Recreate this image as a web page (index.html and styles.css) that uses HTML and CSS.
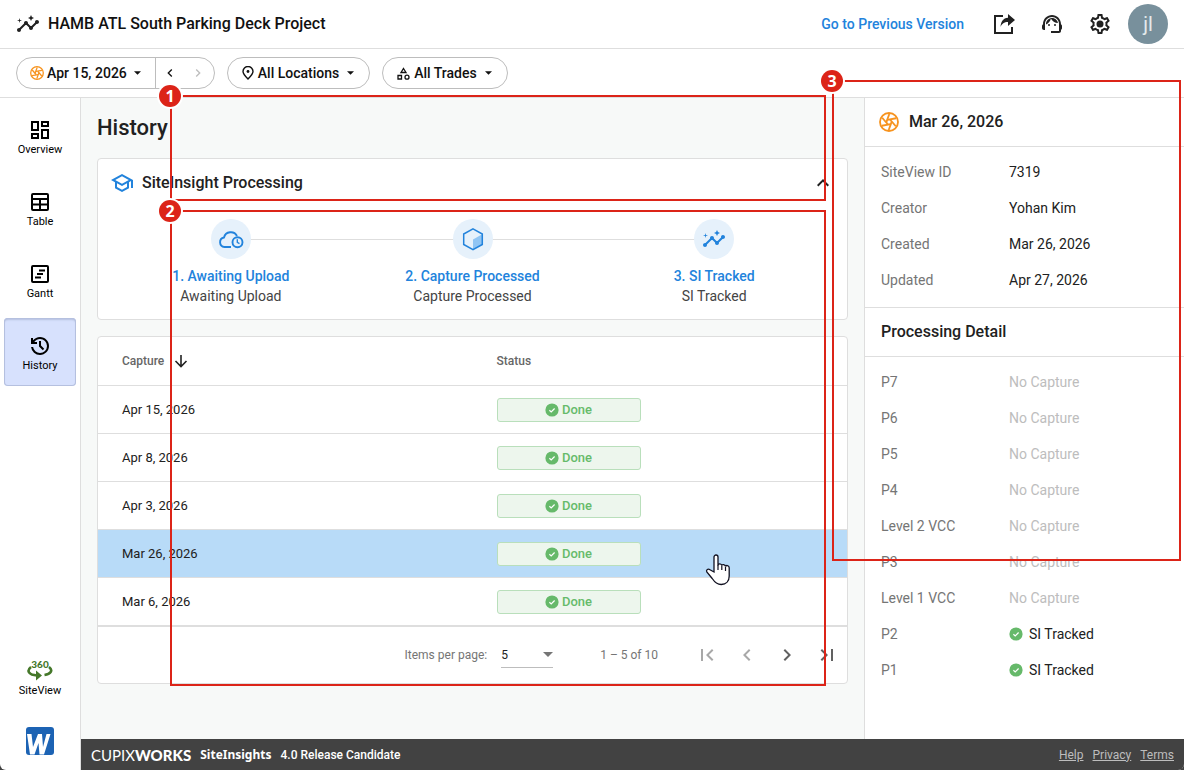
FILE: index.html
```
<!DOCTYPE html>
<html lang="en">
<head>
  <meta charset="utf-8">
  <title>HAMB ATL South Parking Deck Project - History</title>
  <link rel="stylesheet" href="styles.css">
</head>
<body>
  <!-- shared icons -->
  <svg class="sprite" aria-hidden="true">
    <symbol id="insights" viewBox="0 0 24 24">
      <path d="M21 8c-1.45 0-2.26 1.44-1.93 2.51l-3.55 3.56c-.3-.09-.74-.09-1.04 0l-2.55-2.55C12.27 10.45 11.46 9 10 9c-1.45 0-2.27 1.44-1.93 2.52l-4.56 4.55C2.44 15.74 1 16.55 1 18c0 1.1.9 2 2 2 1.45 0 2.26-1.44 1.93-2.51l4.55-4.56c.3.09.74.09 1.04 0l2.55 2.55C12.73 16.55 13.54 18 15 18c1.45 0 2.27-1.44 1.93-2.52l3.56-3.55C21.56 12.26 23 11.45 23 10c0-1.1-.9-2-2-2z"/>
      <path d="M15 9l.94-2.07L18 6l-2.06-.93L15 3l-.92 2.07L12 6l2.08.93zM3.5 11L4 9l2-.5L4 8l-.5-2L3 8l-2 .5L3 9z"/>
    </symbol>
    <symbol id="iris" viewBox="0 0 24 24">
      <g fill="none" stroke="currentColor" stroke-width="2.2">
        <circle cx="12" cy="12" r="10.8"/>
        <path d="M10 9.400L20.500 7.500"/>
        <path d="M10 9.400L20.500 7.500" transform="rotate(60 12 12)"/>
        <path d="M10 9.400L20.500 7.500" transform="rotate(120 12 12)"/>
        <path d="M10 9.400L20.500 7.500" transform="rotate(180 12 12)"/>
        <path d="M10 9.400L20.500 7.500" transform="rotate(240 12 12)"/>
        <path d="M10 9.400L20.500 7.500" transform="rotate(300 12 12)"/>
      </g>
    </symbol>
    <symbol id="caret" viewBox="0 0 8 4"><path d="M0 0h8L4 4z"/></symbol>
    <symbol id="left" viewBox="0 0 24 24"><path d="M15.41 7.41L14 6l-6 6 6 6 1.41-1.41L10.83 12z"/></symbol>
    <symbol id="right" viewBox="0 0 24 24"><path d="M10 6L8.59 7.41 13.17 12l-4.58 4.59L10 18l6-6z"/></symbol>
    <symbol id="check" viewBox="0 0 14 14">
      <circle cx="7" cy="7" r="6.6"/>
      <path d="M4.4 7.2l1.8 1.7 3.4-3.4" fill="none" stroke="#fff" stroke-width="1.2"/>
    </symbol>
  </svg>

  <div class="app">
    <header class="header">
      <svg class="icon"><use href="#insights"/></svg>
      <h1 class="project">HAMB ATL South Parking Deck Project</h1>
      <a class="previous" href="#">Go to Previous Version</a>
      <button class="icon-btn" aria-label="Share">
        <svg class="icon" viewBox="0 0 24 24"><path d="M11 4H3v17h17v-6" fill="none" stroke="currentColor" stroke-width="2"/><path d="M16 2l7 6-7 6v-4c-4 0-6 1.500-7.500 5C9 9.500 11 6.200 16 5.800z"/></svg>
      </button>
      <button class="icon-btn" aria-label="Support">
        <svg class="icon" viewBox="0 0 24 24"><path d="M21 12.220C21 6.730 16.740 3 12 3c-4.690 0-9 3.650-9 9.280-.6.340-1 .980-1 1.720v2c0 1.100.9 2 2 2h1v-6.100c0-3.870 3.130-7 7-7s7 3.130 7 7V19h-8v2h8c1.100 0 2-.9 2-2v-1.220c.590-.310 1-.920 1-1.640v-2.300c0-.7-.410-1.310-1-1.620z"/><circle cx="9" cy="13" r="1"/><circle cx="15" cy="13" r="1"/><path d="M18 11.030C17.520 8.180 15.040 6 12.050 6c-3.030 0-6.290 2.510-6.030 6.450 2.470-1.010 4.330-3.210 4.860-5.890C12.190 9.190 14.880 11 18 11.030z"/></svg>
      </button>
      <button class="icon-btn" aria-label="Settings">
        <svg class="icon" viewBox="0 0 24 24"><path d="M19.430 12.980c.04-.32.07-.64.07-.98 0-.34-.03-.66-.07-.98l2.110-1.650c.19-.15.24-.42.12-.64l-2-3.460c-.09-.16-.26-.25-.44-.25-.06 0-.12.01-.17.03l-2.490 1c-.52-.4-1.080-.73-1.690-.98l-.38-2.650C14.460 2.180 14.250 2 14 2h-4c-.25 0-.46.18-.49.42l-.38 2.650c-.61.25-1.170.59-1.690.98l-2.490-1c-.06-.02-.12-.03-.18-.03-.17 0-.34.09-.43.25l-2 3.460c-.13.22-.07.49.12.64l2.110 1.650c-.04.32-.07.65-.07.98 0 .33.03.66.07.98l-2.110 1.650c-.19.15-.24.42-.12.64l2 3.460c.09.16.26.25.44.25.06 0 .12-.01.17-.03l2.490-1c.52.4 1.080.73 1.690.98l.38 2.650c.03.24.24.42.49.42h4c.25 0 .46-.18.49-.42l.38-2.650c.61-.25 1.170-.59 1.690-.98l2.490 1c.06.02.12.03.18.03.17 0 .34-.09.43-.25l2-3.460c.12-.22.07-.49-.12-.64l-2.110-1.650zm-1.980-1.710c.04.31.05.52.05.73 0 .21-.02.43-.05.73l-.14 1.130.89.7 1.080.84-.7 1.210-1.270-.51-1.040-.42-.9.68c-.43.32-.84.56-1.250.73l-1.060.43-.16 1.130-.2 1.350h-1.400l-.19-1.350-.16-1.130-1.060-.43c-.43-.18-.83-.41-1.230-.71l-.91-.7-1.060.43-1.270.51-.7-1.210 1.080-.84.89-.7-.14-1.130c-.03-.31-.05-.54-.05-.74s.02-.43.05-.73l.14-1.130-.89-.7-1.080-.84.7-1.210 1.270.51 1.040.42.9-.68c.43-.32.84-.56 1.250-.73l1.060-.43.16-1.130.2-1.350h1.390l.19 1.350.16 1.130 1.060.43c.43.18.83.41 1.230.71l.91.7 1.060-.43 1.270-.51.7 1.210-1.070.85-.89.7.14 1.130z"/><circle cx="12" cy="12" r="3.5"/></svg>
      </button>
      <button class="avatar" aria-label="Account">jl</button>
    </header>

    <div class="toolbar">
      <div class="pill-group">
        <button class="date-btn"><svg class="iris-sm"><use href="#iris"/></svg>Apr 15, 2026<svg class="caret"><use href="#caret"/></svg></button>
        <button class="step-btn" aria-label="Previous date"><svg class="icon-sm"><use href="#left"/></svg></button>
        <button class="step-btn" aria-label="Next date" disabled><svg class="icon-sm"><use href="#right"/></svg></button>
      </div>
      <button class="pill">
        <svg class="pin" viewBox="0 0 12 14" fill="none" stroke="currentColor" stroke-width="1.4"><path d="M6 13C3 10 1 8 1 5.500a5 5 0 0 1 10 0C11 8 9 10 6 13z"/><circle cx="6" cy="5.500" r="1.400" fill="currentColor" stroke="none"/></svg>
        All Locations<svg class="caret"><use href="#caret"/></svg>
      </button>
      <button class="pill">
        <svg class="shapes" viewBox="0 0 13 13" fill="none" stroke="currentColor" stroke-width="1.3"><path d="M6.500 1.500L9 5.500H4z"/><path d="M1 8.500h3.500V12H1z"/><circle cx="10" cy="10.200" r="2"/></svg>
        All Trades<svg class="caret"><use href="#caret"/></svg>
      </button>
    </div>

    <div class="body">
      <nav class="sidebar">
        <a class="nav-item" href="#">
          <svg class="icon" viewBox="0 0 24 24"><path d="M19 5v2h-4V5h4M9 5v6H5V5h4m10 8v6h-4v-6h4M9 17v2H5v-2h4M21 3h-8v6h8V3zM11 3H3v10h8V3zm10 8h-8v10h8V11zm-10 4H3v6h8v-6z"/></svg>
          Overview
        </a>
        <a class="nav-item" href="#">
          <svg class="icon" viewBox="0 0 24 24" fill="none" stroke="currentColor" stroke-width="2"><rect x="4" y="4" width="16" height="16" rx="1"/><path d="M4 9h16M4 14.500h16M12 9v11"/></svg>
          Table
        </a>
        <a class="nav-item" href="#">
          <svg class="icon" viewBox="0 0 24 24" fill="none" stroke="currentColor" stroke-width="2"><rect x="4" y="4" width="16" height="16" rx="1"/><path d="M11 8.500h6M9 12h6M7 15.500h6"/></svg>
          Gantt
        </a>
        <a class="nav-item active" href="#">
          <svg class="icon" viewBox="0 -960 960 960"><path d="M480-120q-138 0-240.500-91.500T122-440h82q14 104 92.500 172T480-200q117 0 198.500-81.500T760-480q0-117-81.500-198.500T480-760q-69 0-129 32t-101 88h110v80H120v-240h80v94q51-64 124.500-99T480-840q75 0 140.500 28.500t114 77q48.500 48.500 77 114T840-480q0 75-28.500 140.500t-77 114q-48.500 48.500-114 77T480-120Zm112-192L440-464v-216h80v184l128 128-56 56Z"/></svg>
          History
        </a>
        <div class="nav-bottom">
          <a class="nav-item" href="#">
            <svg class="icon siteview" viewBox="0 0 26 24"><text x="13" y="9" text-anchor="middle">360</text><g fill="none" stroke="currentColor" stroke-width="2.600"><path d="M4 8C-1 12 2 16 10 16.500"/><path d="M22 8c4.500 3.500 1.500 7-4.500 8"/></g><path d="M9 11.500l6 5-6 5z"/></svg>
            SiteView
          </a>
          <a class="works" href="#" aria-label="CupixWorks">
            <svg viewBox="0 0 28 28"><rect width="28" height="28" rx="3" fill="#1c63b4"/><path d="M1 7h4.500l1.500 13 5-13h4l1 13 3.500-13h4L18 27.500h-4.500L12.500 16 8.500 27.500H4z" fill="#fff"/></svg>
          </a>
        </div>
      </nav>

      <div class="content">
        <div class="columns">
          <main class="main">
            <h2 class="page-title">History</h2>

            <section class="card">
              <div class="card-head">
                <svg class="icon blue" viewBox="0 0 24 24"><path d="M12 3L1 9l4 2.180v6L12 21l7-3.820v-6l2-1.090V17h2V9L12 3zm6.820 6L12 12.720 5.180 9 12 5.280 18.820 9zM17 15.990l-5 2.730-5-2.730v-3.720L12 15l5-2.730v3.720z"/></svg>
                <h3>SiteInsight Processing</h3>
                <button class="collapse" aria-label="Collapse"><svg class="icon" viewBox="0 0 24 24"><path d="M12 8l-6 6 1.410 1.410L12 10.830l4.590 4.580L18 14z"/></svg></button>
              </div>
              <ol class="steps">
                <li>
                  <span class="step-icon">
                    <svg viewBox="0 0 26 26" fill="none" stroke="currentColor" stroke-width="1.900"><path d="M13 21H6.500A4.800 4.800 0 0 1 6 11.500a7 7 0 0 1 13-1.500"/><circle cx="19.500" cy="16.200" r="5"/><path d="M19.300 13.200v3.200l2.200 1.200" stroke-width="1.400"/></svg>
                  </span>
                  <strong>1. Awaiting Upload</strong>
                  <span>Awaiting Upload</span>
                </li>
                <li>
                  <span class="step-icon">
                    <svg viewBox="0 0 26 26"><path d="M13 13.500l9.200-5.200v10.400L13 23.800z" fill="#90c5f4"/><path d="M13 2.800l9.300 5.200v10.500L13 23.700l-9.300-5.200V8z" fill="none" stroke="currentColor" stroke-width="1.500"/></svg>
                  </span>
                  <strong>2. Capture Processed</strong>
                  <span>Capture Processed</span>
                </li>
                <li>
                  <span class="step-icon"><svg class="icon"><use href="#insights"/></svg></span>
                  <strong>3. SI Tracked</strong>
                  <span>SI Tracked</span>
                </li>
              </ol>
            </section>

            <section class="card">
              <table class="captures">
                <thead>
                  <tr>
                    <th><button class="sort">Capture<svg viewBox="0 0 14 14" fill="none" stroke="#222" stroke-width="1.600"><path d="M7 1v11M1.500 7L7 12.500 12.500 7"/></svg></button></th>
                    <th>Status</th>
                  </tr>
                </thead>
                <tbody>
                  <tr><td>Apr 15, 2026</td><td><span class="chip"><svg><use href="#check"/></svg>Done</span></td></tr>
                  <tr><td>Apr 8, 2026</td><td><span class="chip"><svg><use href="#check"/></svg>Done</span></td></tr>
                  <tr><td>Apr 3, 2026</td><td><span class="chip"><svg><use href="#check"/></svg>Done</span></td></tr>
                  <tr class="selected"><td>Mar 26, 2026</td><td><span class="chip"><svg><use href="#check"/></svg>Done</span></td></tr>
                  <tr><td>Mar 6, 2026</td><td><span class="chip"><svg><use href="#check"/></svg>Done</span></td></tr>
                </tbody>
              </table>
              <div class="paginator">
                <label for="size">Items per page:</label>
                <div class="size">
                  <select id="size">
                    <option>5</option>
                    <option>10</option>
                    <option>25</option>
                  </select>
                  <svg><use href="#caret"/></svg>
                </div>
                <span class="range">1 – 5 of 10</span>
                <button aria-label="First page" disabled><svg class="icon" viewBox="0 0 24 24"><path d="M18.410 16.590L13.820 12l4.590-4.590L17 6l-6 6 6 6zM6 6h2v12H6z"/></svg></button>
                <button aria-label="Previous page" disabled><svg class="icon"><use href="#left"/></svg></button>
                <button aria-label="Next page"><svg class="icon"><use href="#right"/></svg></button>
                <button aria-label="Last page"><svg class="icon" viewBox="0 0 24 24"><path d="M5.590 7.410L10.180 12l-4.590 4.590L7 18l6-6-6-6zM16 6h2v12h-2z"/></svg></button>
              </div>
            </section>
          </main>

          <aside class="details">
            <div class="details-head"><svg class="iris"><use href="#iris"/></svg><h3>Mar 26, 2026</h3></div>
            <dl>
              <dt>SiteView ID</dt><dd>7319</dd>
              <dt>Creator</dt><dd>Yohan Kim</dd>
              <dt>Created</dt><dd>Mar 26, 2026</dd>
              <dt>Updated</dt><dd>Apr 27, 2026</dd>
            </dl>
            <div class="details-head section"><h3>Processing Detail</h3></div>
            <dl>
              <dt>P7</dt><dd class="none">No Capture</dd>
              <dt>P6</dt><dd class="none">No Capture</dd>
              <dt>P5</dt><dd class="none">No Capture</dd>
              <dt>P4</dt><dd class="none">No Capture</dd>
              <dt>Level 2 VCC</dt><dd class="none">No Capture</dd>
              <dt>P3</dt><dd class="none">No Capture</dd>
              <dt>Level 1 VCC</dt><dd class="none">No Capture</dd>
              <dt>P2</dt><dd><svg><use href="#check"/></svg>SI Tracked</dd>
              <dt>P1</dt><dd><svg><use href="#check"/></svg>SI Tracked</dd>
            </dl>
          </aside>
        </div>

        <footer class="footer">
          <span class="brand">CUPIX<b>WORKS</b></span>
          <span class="product">SiteInsights</span>
          <span class="version">4.0 Release Candidate</span>
          <a href="#">Help</a>
          <a href="#">Privacy</a>
          <a href="#">Terms</a>
        </footer>
      </div>
    </div>

    <!-- callouts -->
    <div class="callout callout-1"><span>1</span></div>
    <div class="callout callout-2"><span>2</span></div>
    <div class="callout callout-3"><span>3</span></div>
    <svg class="pointer" viewBox="0 0 26 33"><path d="M9 19V4a2 2 0 0 1 4 0v8.500c0-2.200 3.600-2.200 3.800.3 0-1.800 3.500-1.700 3.700.7.300-1.500 3.700-1.400 3.700 1.200V23c0 5-3 8.500-8 8.500-4.500 0-6.700-2.500-9-6L1.800 19c-1-2 1.200-3.700 3.200-2.200z" fill="#fff" stroke="#101020" stroke-width="1.300"/><path d="M13 12v5M16.800 13v4M20.500 14v4" stroke="#101020" stroke-width="1.200"/></svg>
  </div>
</body>
</html>
```

FILE: styles.css
```
* {
  box-sizing: border-box;
}
body {
  font-family: Roboto, Arial, sans-serif;
  font-size: 14px;
  line-height: 20px;
  color: #212121;
  background: #424242;
  margin: 0;
}
h1, h2, h3, ol, dl, dd {
  margin: 0;
  padding: 0;
}
button, select {
  font: inherit;
  color: inherit;
  background: none;
  border: none;
  padding: 0;
  cursor: pointer;
}
svg {
  fill: currentColor;
  flex-shrink: 0;
}
svg[fill="none"] {
  fill: none;
}
.sprite {
  position: absolute;
  width: 0;
  height: 0;
}
.icon {
  width: 24px;
  height: 24px;
}
.icon-sm {
  width: 16px;
  height: 16px;
}
.blue { color: #2283dc; }
.app {
  position: relative;
  display: flex;
  flex-direction: column;
  min-height: 100vh;
  background: #fff;
  border-radius: 0 0 6px 6px;
  overflow: hidden;
}

/* header */
.header {
  display: flex;
  align-items: center;
  gap: 8px;
  height: 49px;
  padding: 0 16px;
  border-bottom: 1px solid #dedede;
}
.project {
  flex: 1;
  font-size: 16px;
  font-weight: 500;
  color: #111;
}
.previous {
  color: #2283dc;
  font-weight: 500;
  text-decoration: none;
  margin-right: 12px;
}
.icon-btn {
  display: flex;
  align-items: center;
  justify-content: center;
  width: 40px;
  height: 40px;
}
.avatar {
  width: 40px;
  height: 40px;
  border-radius: 50%;
  background: #78909c;
  color: #e4e9eb;
  font-size: 20px;
}

/* filters */
.toolbar {
  display: flex;
  align-items: center;
  gap: 12px;
  height: 49px;
  padding: 0 16px;
  border-bottom: 1px solid #dedede;
  font-weight: 500;
  color: #111;
}
.pill-group, .pill {
  display: flex;
  align-items: center;
  height: 32px;
  border: 1px solid #bdbdbd;
  border-radius: 16px;
}
.pill {
  gap: 4px;
  padding: 0 15px 0 14px;
}
.date-btn {
  display: flex;
  align-items: center;
  gap: 3px;
  height: 30px;
  padding: 0 14px 0 13px;
  border-right: 1px solid #bdbdbd;
}
.step-btn {
  display: flex;
  padding: 0 4px 0 6px;
}
.step-btn + .step-btn {
  padding: 0 8px;
}
.step-btn:disabled { color: #bdbdbd; }
.iris-sm {
  width: 14px;
  height: 14px;
  color: #f7931e;
}
.caret {
  width: 7px;
  height: 4px;
  margin-left: 4px;
}
.pin {
  width: 12px;
  height: 14px;
}
.shapes {
  width: 13px;
  height: 13px;
}

/* sidebar */
.body {
  display: flex;
  flex: 1;
}
.sidebar {
  display: flex;
  flex-direction: column;
  gap: 4px;
  width: 81px;
  padding: 4px 4px 15px;
  border-right: 1px solid #dedede;
}
.nav-item {
  display: flex;
  flex-direction: column;
  align-items: center;
  width: 72px;
  height: 68px;
  padding-top: 16px;
  font-size: 11px;
  line-height: 16px;
  color: #000;
  text-decoration: none;
  border-radius: 4px;
}
.nav-item.active {
  background: #d7e1fd;
  box-shadow: inset 0 0 0 1px #b5c0df, inset 0 2px 2px #b5c0df;
}
.nav-bottom {
  display: flex;
  flex-direction: column;
  align-items: center;
  margin-top: auto;
}
.nav-bottom .nav-item {
  height: 84px;
}
.siteview {
  width: 26px;
  color: #45782a;
}
.siteview text {
  font: 900 10px Lato, sans-serif;
}
.works svg {
  display: block;
  width: 28px;
  height: 28px;
}

/* main */
.content {
  display: flex;
  flex-direction: column;
  flex: 1;
}
.columns {
  display: flex;
  flex: 1;
}
.main {
  display: flex;
  flex-direction: column;
  flex: 1;
  gap: 16px;
  padding: 16px;
  background: #f7f9f8;
}
.page-title {
  font-size: 22px;
  line-height: 28px;
  font-weight: 500;
}
.card {
  background: #fff;
  border: 1px solid #dedede;
  border-radius: 4px;
}
.card-head {
  display: flex;
  align-items: center;
  gap: 8px;
  height: 48px;
  padding: 0 12px;
}
.card-head h3 {
  flex: 1;
  font-size: 16px;
  font-weight: 500;
}
.collapse { display: flex; }
.steps {
  display: flex;
  list-style: none;
  padding: 12px 12px 13px;
}
.steps li {
  position: relative;
  flex: 1;
  display: flex;
  flex-direction: column;
  align-items: center;
  color: #444;
}
/* line that joins two steps */
.steps li + li::before {
  content: "";
  position: absolute;
  top: 20px;
  left: -50%;
  width: 100%;
  height: 1px;
  background: #dedede;
}
.step-icon {
  position: relative;
  z-index: 1;
  display: flex;
  align-items: center;
  justify-content: center;
  width: 40px;
  height: 40px;
  margin-bottom: 7px;
  border-radius: 50%;
  background: #e6f1fb;
  color: #2283dc;
}
.step-icon svg {
  width: 26px;
  height: 26px;
}
.step-icon .icon {
  width: 24px;
  height: 24px;
}
.steps strong {
  color: #2283dc;
  font-weight: 500;
}

/* table */
.captures {
  width: 100%;
  table-layout: fixed;
  border-collapse: separate;
  border-spacing: 0;
  font-size: 13px;
}
.captures th, .captures td {
  height: 48px;
  padding: 0 24px;
  text-align: left;
  border-bottom: 1px solid #dedede;
}
.captures th {
  height: 49px;
  font-size: 12px;
  font-weight: 500;
  color: #666;
}
.captures tbody tr:last-child td {
  height: 49px;
  border-bottom-width: 2px;
}
.selected { background: #b8dbf8; }
.sort {
  display: flex;
  align-items: center;
  gap: 10px;
}
.sort svg {
  width: 14px;
  height: 14px;
}
.chip {
  display: flex;
  align-items: center;
  justify-content: center;
  gap: 3px;
  width: 144px;
  height: 24px;
  border: 1px solid #b9dfbb;
  border-radius: 3px;
  background: #edf6ed;
  color: #66bb6a;
  font-weight: 500;
}
.chip svg, dd svg {
  width: 14px;
  height: 14px;
  color: #66b96a;
}
.paginator {
  display: flex;
  align-items: center;
  justify-content: flex-end;
  height: 56px;
  font-size: 12px;
  color: #757575;
}
.size {
  display: flex;
  align-items: center;
  width: 52px;
  height: 26px;
  margin-left: 14px;
  border-bottom: 1px solid #bdbdbd;
}
.size select {
  appearance: none;
  flex: 1;
  color: #212121;
}
.size svg {
  width: 10px;
  height: 5px;
}
.range {
  margin: 0 29px 0 47px;
}
.paginator button {
  display: flex;
  justify-content: center;
  width: 40px;
  color: #616161;
}
.paginator button:disabled { color: #a8a8a8; }

/* details */
.details {
  width: 320px;
  border-left: 1px solid #dedede;
}
.details-head {
  display: flex;
  align-items: center;
  gap: 10px;
  height: 49px;
  padding: 0 14px;
  border-bottom: 1px solid #dedede;
}
.details-head h3 {
  font-size: 16px;
  font-weight: 500;
}
.section {
  height: 50px;
  padding: 0 16px;
  border-top: 1px solid #dedede;
}
.iris {
  width: 20px;
  height: 20px;
  color: #f7931e;
}
.details dl {
  display: grid;
  grid-template-columns: 128px 1fr;
  padding: 7px 16px 9px;
  line-height: 36px;
}
.details dt { color: #757575; }
.details dd {
  display: flex;
  align-items: center;
  gap: 6px;
}
.details .none { color: #bdbdbd; }

/* footer */
.footer {
  display: flex;
  align-items: center;
  gap: 9px;
  height: 31px;
  padding: 0 10px;
  background: #424242;
  color: #fff;
  font-size: 12px;
}
.brand {
  font-family: Lato, sans-serif;
  font-size: 15px;
}
.brand b { font-weight: 900; }
.product {
  font-family: "Noto Sans", sans-serif;
  font-size: 12px;
  font-weight: 700;
}
.version {
  flex: 1;
  font-weight: 500;
}
.footer a { color: #bdbdbd; }

/* callouts */
.callout {
  position: absolute;
  border: 2px solid #dc2418;
  pointer-events: none;
}
.callout span {
  position: absolute;
  top: -12px;
  left: -13px;
  width: 22px;
  height: 22px;
  border-radius: 50%;
  background: #dc2418;
  box-shadow: 0 0 0 2px #fff;
  color: #fff;
  font: 700 16px/22px "Open Sans", sans-serif;
  text-align: center;
}
.callout-1 {
  top: 95px;
  left: 170px;
  right: 358px;
  height: 106px;
}
.callout-2 {
  top: 210px;
  left: 170px;
  right: 358px;
  height: 476px;
}
.callout-3 {
  top: 80px;
  left: 832px;
  right: 3px;
  height: 481px;
}
.pointer {
  position: absolute;
  top: 553px;
  left: 705px;
  width: 26px;
  height: 33px;
}
```
